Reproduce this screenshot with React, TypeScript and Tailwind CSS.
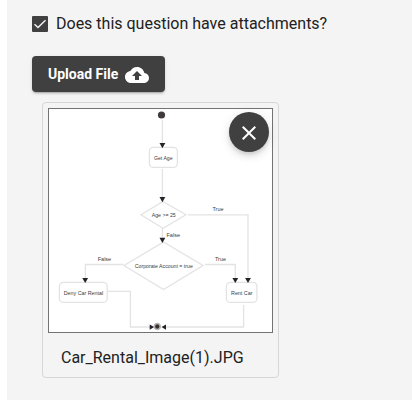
const line = { fill: 'none', stroke: '#e3e3e3', strokeWidth: 1.3 };

function Arrow({ x, y }: { x: number; y: number }) {
  return <path d={`M${x - 2.9} ${y - 4.5}h5.8L${x} ${y + 0.7}z`} fill="#25222a" />;
}

function Label({ x, y, w, children }: { x: number; y: number; w: number; children: string }) {
  return (
    <text x={x} y={y} textLength={w} lengthAdjust="spacingAndGlyphs" fontSize="5.5" fill="#3c3c3c">
      {children}
    </text>
  );
}

function Diagram() {
  return (
    <svg viewBox="49 109 223 223" className="block h-full w-full font-['Liberation_Sans',sans-serif]">
      <g {...line}>
        <path d="M162.4 120v24M162.4 169v29M162.4 228v10" />
        <rect x="149.4" y="147.4" width="28" height="20" rx="4" fill="#fff" />
        <path d="M163 201.5L186 214.8L163 228.3L141 214.8Z" />
        <path d="M188 214.8H248V278" />
        <path d="M163.5 242L203 265.5L163.5 289.5L124 265.5Z" />
        <path d="M123.5 264.5H85.4V278M205 264.5H235.3V278" />
        <rect x="59.4" y="282.4" width="47.8" height="20" rx="4" fill="#fff" />
        <rect x="226.4" y="282.4" width="30.5" height="20" rx="4" fill="#fff" />
        <path d="M108 291.3H130.4V327H150M243.6 305V327H165" />
      </g>
      <circle cx="161.5" cy="115" r="3.6" fill="#403a3d" />
      <Arrow x={162.4} y={147.5} />
      <Arrow x={162.4} y={201.5} />
      <Arrow x={162.4} y={242.2} />
      <Arrow x={85.2} y={282.4} />
      <Arrow x={235.3} y={282.4} />
      <Arrow x={248} y={282.4} />
      <path d="M149.7 324.5v5.2l4.5-2.6zM166 324.5v5.2l-4.5-2.6z" fill="#25222a" />
      <circle cx="157.3" cy="326.5" r="3.3" fill="#ccc" stroke="#999" strokeWidth=".7" />
      <circle cx="157.3" cy="326.5" r="2.2" fill="#37302d" />
      <Label x={154} y={159.6} w={18.5}>Get Age</Label>
      <Label x={151.7} y={217.2} w={24}>Age &gt;= 25</Label>
      <Label x={212.5} y={211} w={11}>True</Label>
      <Label x={166.5} y={237.2} w={13.5}>False</Label>
      <Label x={97.7} y={260.7} w={13.5}>False</Label>
      <Label x={215} y={260.7} w={11}>True</Label>
      <Label x={134.8} y={268} w={58}>Corporate Account = true</Label>
      <Label x={63.7} y={294.8} w={39.5}>Deny Car Rental</Label>
      <Label x={231} y={294.8} w={21.5}>Rent Car</Label>
    </svg>
  );
}

export default function App() {
  return (
    <div className="h-[400px] w-[412px] overflow-hidden bg-white pl-[7px] font-[Roboto,sans-serif] text-[#212121]">
      <main className="flex h-full flex-col items-start bg-[#f4f4f4] pt-3 pl-[25px]">
        <label className="flex h-6 items-center gap-2 text-base">
          <span className="flex size-4 items-center justify-center rounded-[1px] bg-[#404040]">
            <svg viewBox="0 0 16 16" className="size-4" fill="none" stroke="#f4f4f4" strokeWidth="1.4">
              <path d="M2.5 8.3L6 11.6L13.5 4.3" />
            </svg>
          </span>
          <span className="whitespace-nowrap">Does this question have attachments?</span>
        </label>

        <button className="mt-5 flex h-9 w-[133px] items-center gap-[7px] rounded bg-[#404040] pl-4 text-sm font-bold text-white shadow-[0_3px_1px_-2px_rgba(0,0,0,.16),0_2px_2px_rgba(0,0,0,.1),0_1px_4px_rgba(0,0,0,.08)]">
          <span className="whitespace-nowrap">Upload File</span>
          <svg viewBox="0 0 24 24" className="mt-0.5 size-6 shrink-0" fill="currentColor">
            <path d="M19.35 10.04C18.67 6.59 15.64 4 12 4 9.11 4 6.6 5.64 5.35 8.04 2.34 8.36 0 10.91 0 14c0 3.31 2.69 6 6 6h13c2.76 0 5-2.24 5-5 0-2.64-2.05-4.78-4.65-4.96zM14 13v4h-4v-4H7l5-5 5 5h-3z" />
          </svg>
        </button>

        <section className="mt-[10px] ml-[10px] h-[276px] w-[237px] rounded border border-[#d6d6d6] p-[5px]">
          <div className="relative size-[225px] border border-[#737373] bg-white">
            <Diagram />
            <button aria-label="Remove" className="absolute top-[3px] right-[3px] flex size-10 items-center justify-center rounded-full bg-[#404040] pt-0.5 text-white shadow-[0_3px_4px_-1px_rgba(0,0,0,.14),0_5px_8px_rgba(0,0,0,.08),0_1px_14px_rgba(0,0,0,.06)]">
              <svg viewBox="0 0 24 24" className="size-6" fill="currentColor">
                <path d="M19 6.41L17.59 5 12 10.59 6.41 5 5 6.41 10.59 12 5 17.59 6.41 19 12 13.41 17.59 19 19 17.59 13.41 12z" />
              </svg>
            </button>
          </div>
          <p className="mt-[13px] ml-[13px] text-base leading-6">Car_Rental_Image(1).JPG</p>
        </section>
      </main>
    </div>
  );
}
